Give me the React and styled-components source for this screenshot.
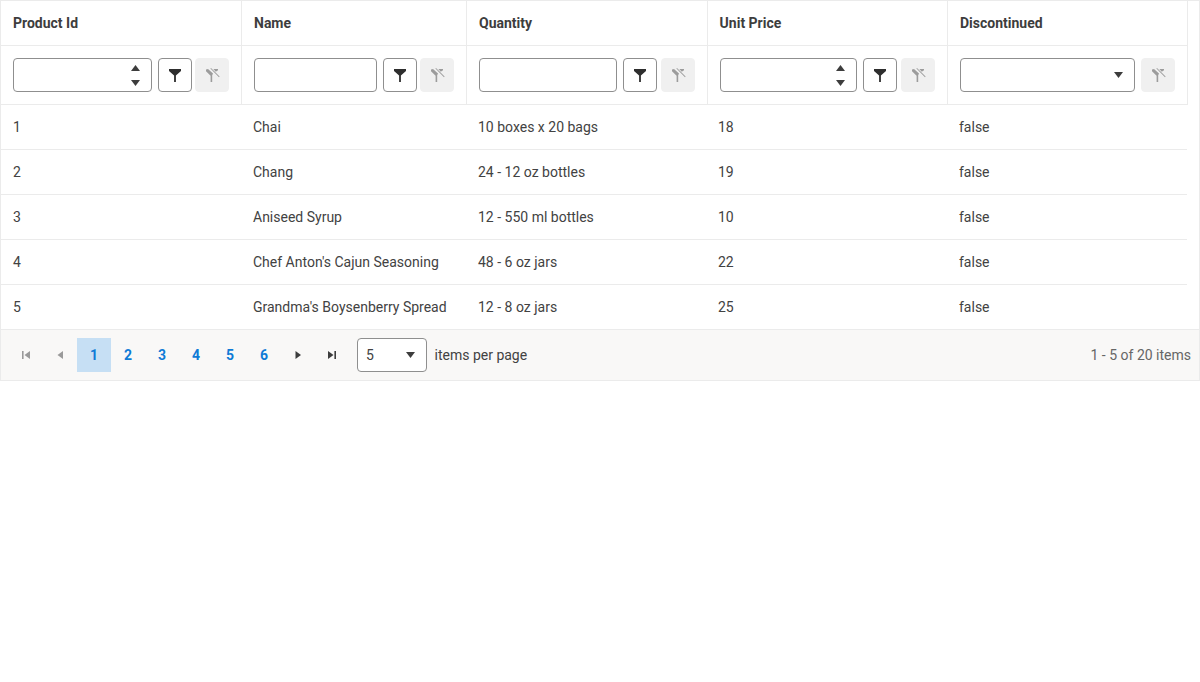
import styled, { createGlobalStyle } from "styled-components";

const GlobalStyle = createGlobalStyle`
  html, body {
    margin: 0;
    padding: 0;
    background: #ffffff;
  }
  * {
    box-sizing: border-box;
  }
`;

const Grid = styled.div`
  width: 1200px;
  border: 1px solid #ebebeb;
  font-family: Roboto, "Liberation Sans", sans-serif;
  font-size: 14px;
  line-height: 20px;
  color: #424242;
`;

const HeaderRow = styled.div`
  display: grid;
  grid-template-columns: 241px 225px 240.6px 240.4px 240px;
  width: 1187px;
  height: 45px;
  border-bottom: 1px solid #ebebeb;
`;

const HeaderCell = styled.div`
  display: flex;
  align-items: center;
  padding: 0 12px;
  border-right: 1px solid #ebebeb;
  font-weight: 700;
  color: #3d3d3d;
`;

const FilterRow = styled.div`
  display: grid;
  grid-template-columns: 241px 225px 241px 240px 240px;
  width: 1187px;
  height: 59px;
  border-bottom: 1px solid #ebebeb;
`;

const FilterCell = styled.div`
  display: flex;
  align-items: center;
  padding: 0 12px;
  border-right: 1px solid #ebebeb;
`;

const FilterInput = styled.div`
  flex: 1;
  min-width: 0;
  height: 34px;
  display: flex;
  justify-content: flex-end;
  align-items: center;
  border: 1px solid #8f8f8f;
  border-radius: 4px;
  background: #ffffff;
`;

const Spinner = styled.div`
  width: 32px;
  display: flex;
  flex-direction: column;
  align-items: center;
  gap: 9px;
`;

const Caret = styled.svg`
  display: block;
  width: 9px;
  height: 6px;
  fill: #3d3d3d;
`;

const FilterButton = styled.button`
  flex: none;
  width: 34px;
  height: 34px;
  margin-left: 6px;
  padding: 0;
  display: flex;
  align-items: center;
  justify-content: center;
  border: 1px solid #8f8f8f;
  border-radius: 4px;
  background: #ffffff;
`;

const ClearButton = styled(FilterButton)`
  margin-left: ${(p) => p.$gap}px;
  border-color: #f0f0f0;
  background: #f0f0f0;
`;

const Icon = styled.svg`
  display: block;
  width: 16px;
  height: 16px;
  fill: ${(p) => p.$color || "#3d3d3d"};
`;

const Rows = styled.div`
  display: flex;
  flex-direction: column;
`;

const BodyRow = styled.div`
  display: grid;
  grid-template-columns: 240px 225px 240px 241px 241px;
  width: 1186px;
  height: 45px;
  border-bottom: 1px solid #ebebeb;

  &:last-child {
    height: 44px;
    border-bottom: 0;
  }
`;

const BodyCell = styled.div`
  display: flex;
  align-items: center;
  padding: 0 12px;
  white-space: nowrap;
`;

const Pager = styled.div`
  display: flex;
  align-items: center;
  height: 51px;
  padding: 0 8px;
  border-top: 1px solid #ebebeb;
  background: #f9f8f7;
`;

const PagerButton = styled.div`
  width: 34px;
  height: 34px;
  display: flex;
  align-items: center;
  justify-content: center;
  font-weight: 700;
  color: #0f7bd6;
  background: ${(p) => (p.$selected ? "#c6dff4" : "transparent")};
`;

const PageSize = styled.div`
  width: 70px;
  height: 34px;
  margin-left: 8px;
  display: flex;
  align-items: center;
  justify-content: space-between;
  padding: 0 11.5px 0 8px;
  border: 1px solid #8f8f8f;
  border-radius: 4px;
  background: #ffffff;
`;

const PagerLabel = styled.span`
  margin-left: 7.5px;
`;

const PagerInfo = styled.span`
  margin-left: auto;
  color: #666666;
`;

const columns = ["Product Id", "Name", "Quantity", "Unit Price", "Discontinued"];

const products = [
  [1, "Chai", "10 boxes x 20 bags", 18, "false"],
  [2, "Chang", "24 - 12 oz bottles", 19, "false"],
  [3, "Aniseed Syrup", "12 - 550 ml bottles", 10, "false"],
  [4, "Chef Anton's Cajun Seasoning", "48 - 6 oz jars", 22, "false"],
  [5, "Grandma's Boysenberry Spread", "12 - 8 oz jars", 25, "false"],
];

const CaretUp = () => (
  <Caret viewBox="0 0 9 6">
    <path d="M4.5 0 9 6H0z" />
  </Caret>
);

const CaretDown = () => (
  <Caret viewBox="0 0 9 6">
    <path d="M0 0h9L4.5 6z" />
  </Caret>
);

const FunnelIcon = () => (
  <Icon viewBox="0 0 16 16" $color="#2e2e2e">
    <path d="M2 2h12v2L8.9 8.5V15H7.1V8.5L2 4z" />
  </Icon>
);

const ClearIcon = () => (
  <Icon viewBox="0 0 16 16" $color="#9c9c9c">
    <path d="M2 2.6 4 2l5 4.6-.8 1.6V15H6.6V8.8L2 4.2z" />
    <path d="M9.4 2H14v1.2l-2.2 1.6z" />
    <path d="M7 1l8.6 8.6-.6.6L6.4 1.6z" />
  </Icon>
);

const PagerIcon = ({ d, color }) => (
  <Icon viewBox="0 0 16 16" $color={color}>
    <path d={d} />
  </Icon>
);

const FIRST = "M4 4h1.6v8H4zM12 4v8L6.5 8z";
const PREV = "M11 4v8L5.5 8z";
const NEXT = "M5.5 4v8L11 8z";
const LAST = "M4 4v8l5.5-4zM10.4 4H12v8h-1.6z";

function NumericFilter() {
  return (
    <FilterInput>
      <Spinner>
        <CaretUp />
        <CaretDown />
      </Spinner>
    </FilterInput>
  );
}

function SelectFilter() {
  return (
    <FilterInput>
      <Spinner>
        <CaretDown />
      </Spinner>
    </FilterInput>
  );
}

function FilterActions({ gap }) {
  return (
    <>
      <FilterButton><FunnelIcon /></FilterButton>
      <ClearButton $gap={gap}><ClearIcon /></ClearButton>
    </>
  );
}

export default function App() {
  return (
    <>
      <GlobalStyle />
      <Grid>
        <HeaderRow>
          {columns.map((c) => (
            <HeaderCell key={c}>{c}</HeaderCell>
          ))}
        </HeaderRow>
        <FilterRow>
          <FilterCell>
            <NumericFilter />
            <FilterActions gap={3} />
          </FilterCell>
          <FilterCell>
            <FilterInput />
            <FilterActions gap={3} />
          </FilterCell>
          <FilterCell>
            <FilterInput />
            <FilterActions gap={4} />
          </FilterCell>
          <FilterCell>
            <NumericFilter />
            <FilterActions gap={4} />
          </FilterCell>
          <FilterCell>
            <SelectFilter />
            <ClearButton $gap={6}><ClearIcon /></ClearButton>
          </FilterCell>
        </FilterRow>
        <Rows>
          {products.map((row) => (
            <BodyRow key={row[0]}>
              {row.map((v, i) => (
                <BodyCell key={i}>{v}</BodyCell>
              ))}
            </BodyRow>
          ))}
        </Rows>
        <Pager>
          <PagerButton><PagerIcon d={FIRST} color="#9a9a9a" /></PagerButton>
          <PagerButton><PagerIcon d={PREV} color="#9a9a9a" /></PagerButton>
          {[1, 2, 3, 4, 5, 6].map((n) => (
            <PagerButton key={n} $selected={n === 1}>{n}</PagerButton>
          ))}
          <PagerButton><PagerIcon d={NEXT} color="#3d3d3d" /></PagerButton>
          <PagerButton><PagerIcon d={LAST} color="#3d3d3d" /></PagerButton>
          <PageSize>
            5
            <CaretDown />
          </PageSize>
          <PagerLabel>items per page</PagerLabel>
          <PagerInfo>1 - 5 of 20 items</PagerInfo>
        </Pager>
      </Grid>
    </>
  );
}
